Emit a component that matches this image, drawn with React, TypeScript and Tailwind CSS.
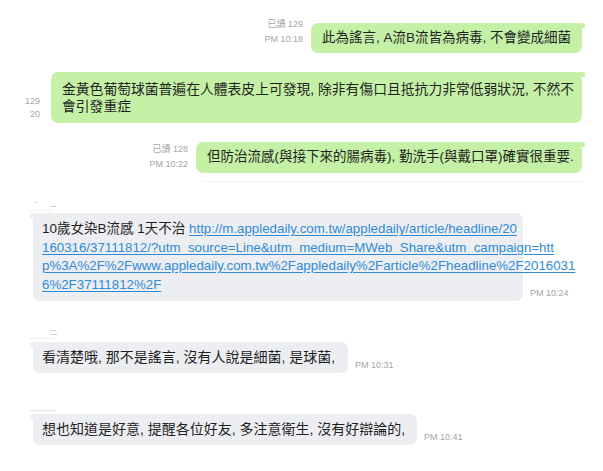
const FONT = "font-['Liberation_Sans','Noto_Sans_CJK_TC',sans-serif]";

function GreenBubble({ className, children }: { className: string; children: React.ReactNode }) {
  return (
    <div className={`relative rounded-[7px] bg-[#c4f1a6] text-[#1f1f1f] ${className}`}>
      <span className="absolute right-[-3px] top-0 h-[5px] w-[7px] rounded-tr-[2px] bg-[#c4f1a6]" />
      {children}
    </div>
  );
}

function GrayBubble({ className, children }: { className: string; children: React.ReactNode }) {
  return (
    <div className={`relative rounded-[7px] bg-[#edeef2] text-[#1f1f1f] ${className}`}>
      <span className="absolute left-[-3px] top-0 h-[5px] w-[7px] rounded-tl-[2px] bg-[#edeef2]" />
      {children}
    </div>
  );
}

function Stamp({ children }: { children: React.ReactNode }) {
  return <span className="mb-[2px] text-[9px] leading-[12px] whitespace-nowrap text-[#a5a5a5]">{children}</span>;
}

export default function App() {
  return (
    <div className={`h-[471px] w-[603px] overflow-hidden bg-white ${FONT}`}>
      <div className="flex flex-col pt-[23px]">
        {/* my messages */}
        <div className="flex items-start justify-end gap-[8px] pr-[21px]">
          <div className="-mt-[6px] flex flex-col items-end text-[9px] leading-[15px] text-[#a5a5a5]">
            <span>已讀 129</span>
            <span>PM 10:18</span>
          </div>
          <GreenBubble className="flex h-[30px] w-[271px] items-center pl-[11px] text-[13.5px] whitespace-nowrap">
            此為謠言, A流B流皆為病毒, 不會變成細菌
          </GreenBubble>
        </div>

        <div className="mt-[19px] flex items-start justify-end gap-[11px] pr-[21px]">
          <div className="mt-[23px] flex flex-col items-end text-[9px] leading-[13px] text-[#a5a5a5]">
            <span>129</span>
            <span>20</span>
          </div>
          <GreenBubble className="flex h-[51px] w-[531px] flex-col justify-center pl-[11px] text-[13.8px] leading-[17px] whitespace-nowrap">
            <span>金黃色葡萄球菌普遍在人體表皮上可發現, 除非有傷口且抵抗力非常低弱狀況, 不然不</span>
            <span>會引發重症</span>
          </GreenBubble>
        </div>

        <div className="mt-[19px] flex items-start justify-end gap-[8px] pr-[21px]">
          <div className="flex flex-col items-end text-[9px] leading-[15px] text-[#a5a5a5]">
            <span>已讀 128</span>
            <span>PM 10:22</span>
          </div>
          <GreenBubble className="flex h-[31px] w-[386px] items-center pl-[11px] text-[13.5px] whitespace-nowrap">
            但防治流感(與接下來的腸病毒), 勤洗手(與戴口罩)確實很重要.
          </GreenBubble>
        </div>

        <div className="mt-[8px] mr-[20px] ml-[203px] h-px bg-[#f4f4f4]" />

        {/* their messages */}
        <div className="flex h-[31px] flex-col justify-end gap-[3px] pb-[2px] pl-[28px]">
          <div className="ml-[6px] h-[2px] w-[3px] bg-[#e6e6e6]" />
          <div className="ml-[22px] h-px w-[6px] bg-[#cfcfcf]" />
          <div className="h-px w-[24px] bg-[#f0f0f0]" />
        </div>
        <div className="flex items-end gap-[7px] pl-[33px]">
          <GrayBubble className="flex h-[88px] w-[490px] flex-col justify-center pl-[9px] leading-[18.5px] whitespace-nowrap">
            <span className="text-[13.5px]">
              10歲女染B流感 1天不治{" "}
              <a className="text-[13.3px] text-[#2f8bd6] underline underline-offset-2" href="#">
                http://m.appledaily.com.tw/appledaily/article/headline/20
              </a>
            </span>
            <a className="text-[13.3px] text-[#2f8bd6] underline underline-offset-2" href="#">
              160316/37111812/?utm_source=Line&amp;utm_medium=MWeb_Share&amp;utm_campaign=htt
            </a>
            <a className="text-[13.3px] text-[#2f8bd6] underline underline-offset-2" href="#">
              p%3A%2F%2Fwww.appledaily.com.tw%2Fappledaily%2Farticle%2Fheadline%2F2016031
            </a>
            <a className="text-[13.3px] text-[#2f8bd6] underline underline-offset-2" href="#">
              6%2F37111812%2F
            </a>
          </GrayBubble>
          <Stamp>PM 10:24</Stamp>
        </div>

        <div className="flex h-[41px] flex-col justify-end gap-[3px] pb-[3px] pl-[30px]">
          <div className="ml-[20px] h-px w-[6px] bg-[#d6d6d6]" />
          <div className="ml-[20px] h-px w-[7px] bg-[#cfcfcf]" />
          <div className="h-px w-[24px] bg-[#f2f2f2]" />
        </div>
        <div className="flex items-end gap-[7px] pl-[33px]">
          <GrayBubble className="flex h-[31px] w-[315px] items-center pl-[9px] text-[14px] whitespace-nowrap">
            看清楚哦, 那不是謠言, 沒有人說是細菌, 是球菌,
          </GrayBubble>
          <Stamp>PM 10:31</Stamp>
        </div>

        <div className="flex h-[41px] flex-col justify-end gap-[2px] pb-[3px] pl-[30px]">
          <div className="h-px w-[26px] bg-[#e4e4e4]" />
        </div>
        <div className="flex items-end gap-[7px] pl-[33px]">
          <GrayBubble className="flex h-[31px] w-[384px] items-center pl-[9px] text-[14px] whitespace-nowrap">
            想也知道是好意, 提醒各位好友, 多注意衛生, 沒有好辯論的,
          </GrayBubble>
          <Stamp>PM 10:41</Stamp>
        </div>
      </div>
    </div>
  );
}
